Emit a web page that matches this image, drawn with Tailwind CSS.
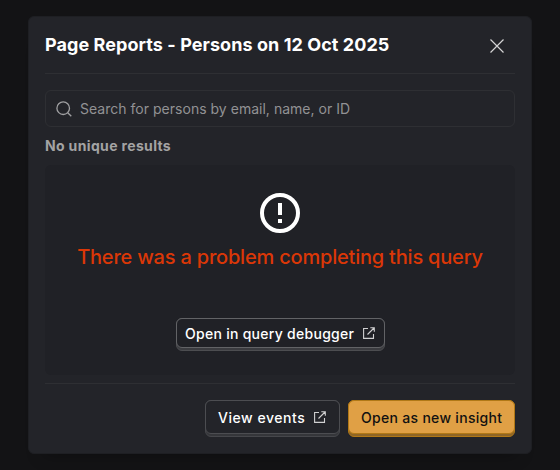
<!DOCTYPE html>
<html lang="en">
<head>
<meta charset="utf-8">
<title>Page Reports</title>
<script src="https://cdn.jsdelivr.net/npm/@tailwindcss/browser@4"></script>
</head>
<body class="h-[470px] overflow-hidden bg-[#131315] font-['Inter',sans-serif] text-white">
<div class="flex px-7 pt-4">
  <section class="flex h-[438px] w-[504px] flex-col rounded-md border border-[#1e1f23] bg-[#232429] px-4 shadow-[0_16px_16px_-16px_rgba(0,0,0,0.35)]">
    <header class="flex h-[57px] shrink-0 items-center justify-between border-b border-[#2e2f33] pr-[10px]">
      <h1 class="whitespace-nowrap text-[18px] leading-6 font-bold tracking-[0.07px]">Page Reports - Persons on 12 Oct 2025</h1>
      <svg class="mt-px size-4" viewBox="0 0 16 16" fill="none" stroke="#d4d4d5" stroke-width="1.2"><path d="M1.5 1.5l13 13M14.5 1.5l-13 13"/></svg>
    </header>
    <div class="mt-4 flex h-[37px] shrink-0 items-center rounded-md border border-[#2e2f33] pl-[10px]">
      <svg class="size-4" viewBox="0 0 16 16" fill="none" stroke="#a0a0a2" stroke-width="1.3"><circle cx="7.2" cy="7.2" r="6.3"/><path d="M11.7 11.7l3.6 3.6"/></svg>
      <span class="ml-2 text-sm tracking-[0.02px] text-[#929294]">Search for persons by email, name, or ID</span>
    </div>
    <p class="mt-[9px] text-sm leading-5 font-bold tracking-[0.35px] text-[#a3a3a3]">No unique results</p>
    <div class="mt-[9px] flex h-[210px] shrink-0 flex-col items-center rounded-md bg-[#202126] pt-[28px]">
      <svg class="size-10 shrink-0" viewBox="0 0 40 40" fill="none"><circle cx="20" cy="20" r="18" stroke="#fff" stroke-width="4"/><path fill="#fff" d="M18 10h4v12h-4zM18 26h4v4h-4z"/></svg>
      <h2 class="mt-[10px] text-xl leading-7 font-medium tracking-[-0.2px] whitespace-nowrap text-[#db3707]">There was a problem completing this query</h2>
      <div class="mt-[47px] h-[33px] w-[209px] shrink-0 rounded-md border border-[#4c4d50] bg-[#3b3c40]">
        <div class="-mx-px -mt-px flex h-[30px] items-center rounded-md border border-[#626366] bg-[#202126] pl-[8.5px] text-sm font-medium">
          <span class="pt-[2px] tracking-[0.28px] whitespace-nowrap">Open in query debugger</span>
          <svg class="ml-[9px] size-3 shrink-0" viewBox="0 0 12 12" fill="none" stroke="#d0d0d1" stroke-width="1.1"><path d="M5 1.5H.6v9.9h9.9V7M4.5 7.5l6.5-6.5M7.3.7h4v4"/></svg>
        </div>
      </div>
    </div>
    <footer class="mt-2 flex gap-2 border-t border-[#2e2f33] pt-4 text-sm font-medium">
      <div class="ml-auto h-[37px] w-[135px] rounded-md border border-[#46474b] bg-[#35363a]">
        <div class="-mx-px -mt-px flex h-[34px] items-center rounded-md border border-[#4c4d51] bg-[#232429] pl-3">
          <span class="pt-[2px] tracking-[0.54px] whitespace-nowrap">View events</span>
          <svg class="ml-[9px] size-3 shrink-0" viewBox="0 0 12 12" fill="none" stroke="#d0d0d1" stroke-width="1.1"><path d="M5 1.5H.6v9.9h9.9V7M4.5 7.5l6.5-6.5M7.3.7h4v4"/></svg>
        </div>
      </div>
      <div class="h-[37px] w-[167px] rounded-md border border-[#b17816] bg-[#8e6526]">
        <div class="-mx-px -mt-px flex h-[34px] items-center rounded-md border border-[#b17816] bg-[#e0a045] pl-3 text-[#111]">
          <span class="pt-[2px] tracking-[0.3px] whitespace-nowrap">Open as new insight</span>
        </div>
      </div>
    </footer>
  </section>
</div>
</body>
</html>
